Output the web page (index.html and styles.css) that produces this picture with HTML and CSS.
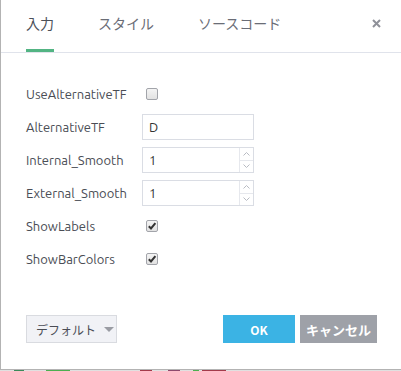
FILE: index.html
```html
<!DOCTYPE html>
<html lang="ja">
<head>
  <meta charset="UTF-8">
  <meta name="viewport" content="width=device-width, initial-scale=1.0">
  <title>入力</title>
  <link rel="stylesheet" href="styles.css">
</head>
<body>
  <div class="dialog">
    <div class="dialog-header">
      <div class="tabs">
        <span class="tab active">入力</span>
        <span class="tab">スタイル</span>
        <span class="tab">ソースコード</span>
      </div>
      <span class="close">
        <svg width="9" height="9" viewBox="0 0 9 9"><path d="M1 1L8 8M8 1L1 8" stroke="#8f9199" stroke-width="2"/></svg>
      </span>
    </div>

    <div class="form">
      <label class="label">UseAlternativeTF</label>
      <div class="field"><span class="checkbox"></span></div>

      <label class="label">AlternativeTF</label>
      <div class="field"><div class="input">D</div></div>

      <label class="label">Internal_Smooth</label>
      <div class="field">
        <div class="input number">
          <span class="value">1</span>
          <span class="spin">
            <span class="spin-btn"><svg width="7" height="4" viewBox="0 0 7 4"><path d="M0.5 3.5L3.5 0.5L6.5 3.5" fill="none" stroke="#b8bbc2"/></svg></span>
            <span class="spin-btn"><svg width="7" height="4" viewBox="0 0 7 4"><path d="M0.5 0.5L3.5 3.5L6.5 0.5" fill="none" stroke="#b8bbc2"/></svg></span>
          </span>
        </div>
      </div>

      <label class="label">External_Smooth</label>
      <div class="field">
        <div class="input number">
          <span class="value">1</span>
          <span class="spin">
            <span class="spin-btn"><svg width="7" height="4" viewBox="0 0 7 4"><path d="M0.5 3.5L3.5 0.5L6.5 3.5" fill="none" stroke="#b8bbc2"/></svg></span>
            <span class="spin-btn"><svg width="7" height="4" viewBox="0 0 7 4"><path d="M0.5 0.5L3.5 3.5L6.5 0.5" fill="none" stroke="#b8bbc2"/></svg></span>
          </span>
        </div>
      </div>

      <label class="label">ShowLabels</label>
      <div class="field">
        <span class="checkbox checked">
          <svg width="10" height="10" viewBox="0 0 10 10"><path d="M1.8 5.2L4 7.4L8.4 2.2" fill="none" stroke="#333" stroke-width="2"/></svg>
        </span>
      </div>

      <label class="label">ShowBarColors</label>
      <div class="field">
        <span class="checkbox checked">
          <svg width="10" height="10" viewBox="0 0 10 10"><path d="M1.8 5.2L4 7.4L8.4 2.2" fill="none" stroke="#333" stroke-width="2"/></svg>
        </span>
      </div>
    </div>

    <div class="dialog-footer">
      <button class="btn-default"><span>デフォルト</span><span class="caret"></span></button>
      <div class="actions">
        <button class="btn btn-ok">OK</button>
        <button class="btn btn-cancel">キャンセル</button>
      </div>
    </div>
  </div>

  <div class="chart-strip">
    <span class="bar" style="left: 14px; width: 10px; background: #3b8a5a;"></span>
    <span class="bar" style="left: 46px; width: 24px; background: #4caf50;"></span>
    <span class="bar" style="left: 140px; width: 12px; background: #a33b4b;"></span>
    <span class="bar" style="left: 168px; width: 12px; background: #8e4a6e;"></span>
    <span class="bar" style="left: 193px; width: 6px; background: #4caf50;"></span>
    <span class="bar" style="left: 202px; width: 24px; background: #a33b4b;"></span>
  </div>
</body>
</html>
```

FILE: styles.css
```css
body {
  margin: 0;
  padding: 0;
  width: 401px;
  height: 371px;
  overflow: hidden;
  background-color: #ffffff;
  font-family: Ubuntu, "Noto Sans", "Noto Sans CJK JP", sans-serif;
  color: #4a4d55;
}
.dialog {
  width: 400px;
  height: 369px;
  border-left: 1px solid #b3b3b3;
  border-bottom: 1px solid #b3b3b3;
  background-color: #ffffff;
  display: flex;
  flex-direction: column;
}
.dialog-header {
  height: 53px;
  box-sizing: border-box;
  border-bottom: 1px solid #e0e3eb;
  display: flex;
  align-items: flex-start;
  justify-content: space-between;
}
.tabs {
  display: flex;
  padding-left: 25px;
  height: 52px;
}
.tab {
  font-family: "Noto Sans CJK JP", sans-serif;
  font-size: 14px;
  color: #6a6d76;
  line-height: 20px;
  padding-top: 13px;
  margin-right: 44px;
  box-sizing: border-box;
  height: 52px;
  border-bottom: 3px solid transparent;
}
.tab.active {
  color: #4c5059;
  border-bottom-color: #52b483;
}
.close {
  margin-top: 19px;
  margin-right: 20px;
  line-height: 0;
}
.form {
  display: grid;
  grid-template-columns: 116px 112px;
  grid-auto-rows: 26px;
  row-gap: 7px;
  padding: 28px 0 0 25px;
}
.label {
  font-size: 13px;
  color: #4a4d55;
  display: flex;
  align-items: center;
  white-space: nowrap;
}
.field {
  display: flex;
  align-items: center;
}
.checkbox {
  width: 12px;
  height: 12px;
  margin-left: 4px;
  box-sizing: border-box;
  border: 1px solid #a2a4aa;
  border-radius: 2px;
  background: linear-gradient(#f4f4f4, #e2e2e2);
  display: flex;
  align-items: center;
  justify-content: center;
}
.checkbox svg {
  display: block;
}
.input {
  width: 112px;
  height: 26px;
  box-sizing: border-box;
  border: 1px solid #dadde4;
  font-size: 13px;
  color: #333;
  padding-left: 6px;
  display: flex;
  align-items: center;
}
.input.number {
  justify-content: space-between;
}
.spin {
  display: flex;
  flex-direction: column;
  width: 13px;
  height: 24px;
  border-left: 1px solid #e6e8ed;
}
.spin-btn {
  flex: 1;
  display: flex;
  align-items: center;
  justify-content: center;
}
.spin-btn + .spin-btn {
  border-top: 1px solid #e6e8ed;
}
.dialog-footer {
  margin-top: auto;
  display: flex;
  justify-content: space-between;
  padding: 0 24px 26px 25px;
}
.btn-default {
  width: 91px;
  height: 28px;
  box-sizing: border-box;
  border: 1px solid #d9dbe0;
  background-color: #f1f2f6;
  font-family: "Noto Sans CJK JP", sans-serif;
  font-size: 12px;
  color: #4a4d55;
  padding: 0 0 0 9px;
  display: flex;
  align-items: center;
  white-space: nowrap;
}
.caret {
  width: 0;
  height: 0;
  border-left: 5px solid transparent;
  border-right: 5px solid transparent;
  border-top: 5px solid #9a9ca3;
  margin-left: 8px;
}
.actions {
  display: flex;
  gap: 5px;
}
.btn {
  height: 28px;
  border: none;
  color: #ffffff;
  font-family: "Noto Sans CJK JP", sans-serif;
  font-weight: 700;
  font-size: 12px;
  padding: 0;
  white-space: nowrap;
}
.btn-ok {
  width: 72px;
  background-color: #3bb3e4;
}
.btn-cancel {
  width: 77px;
  background-color: #9ea1a8;
  font-size: 13px;
}
.chart-strip {
  position: relative;
  height: 1px;
  background-color: #e0e0e0;
}
.bar {
  position: absolute;
  top: 0;
  height: 1px;
}
```
